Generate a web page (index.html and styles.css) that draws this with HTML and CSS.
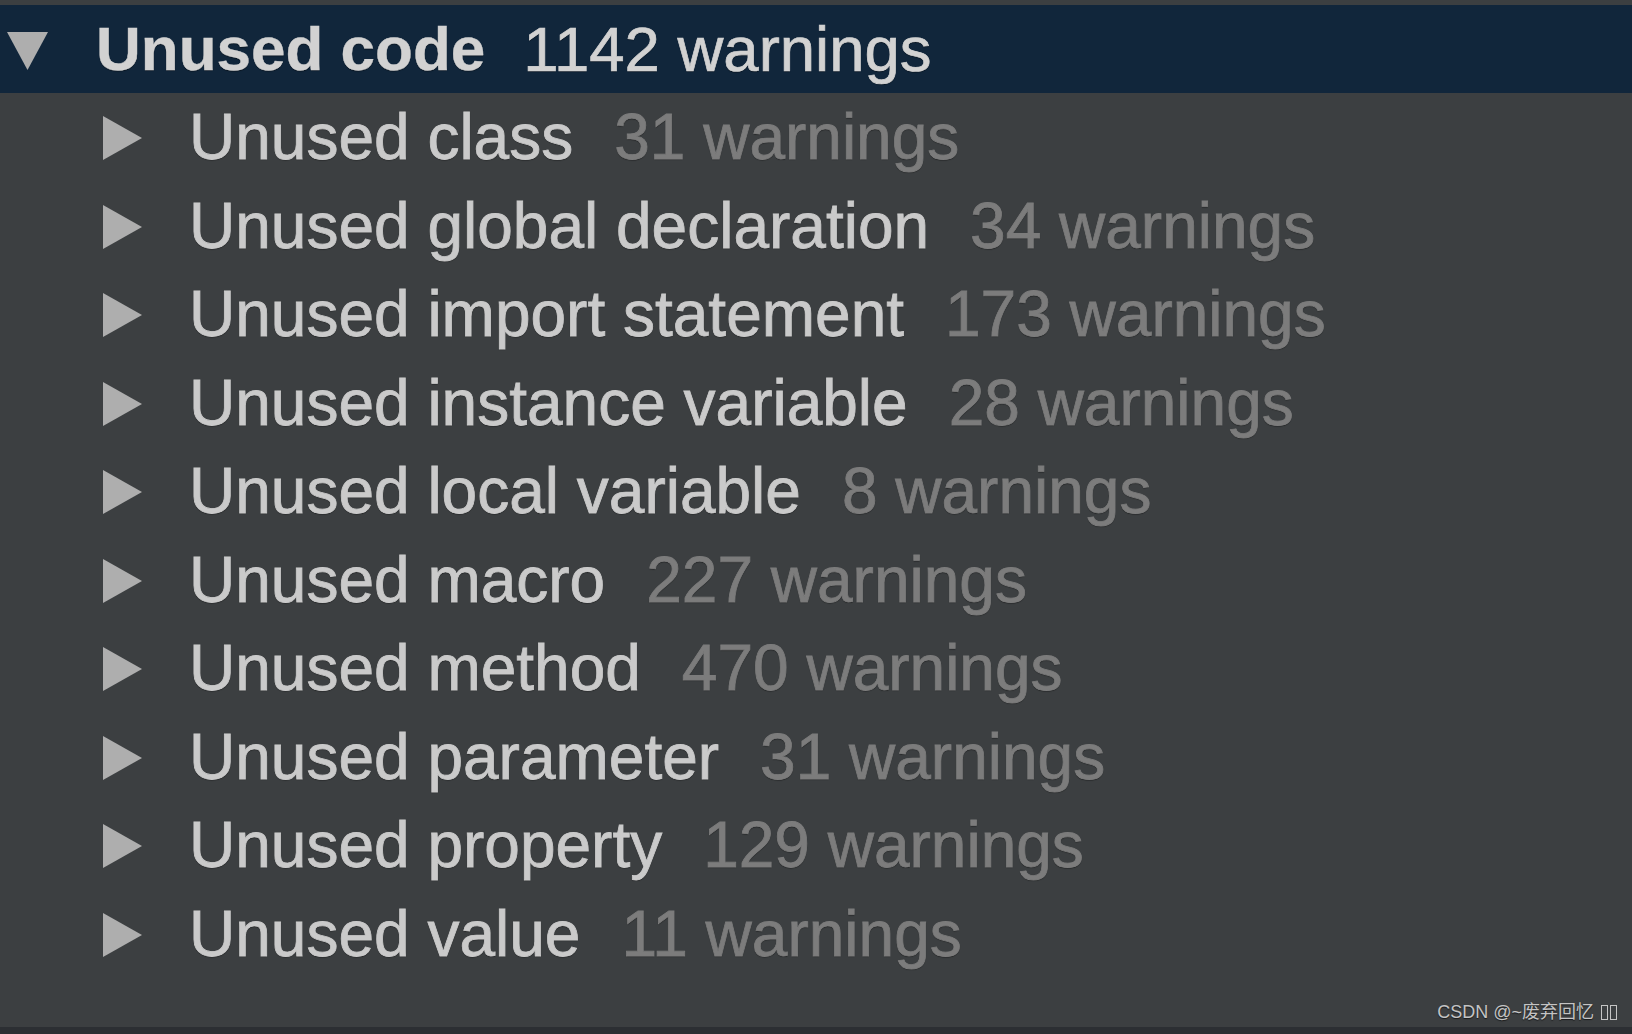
FILE: index.html
```html
<!DOCTYPE html>
<html lang="en">
<head>
<meta charset="utf-8">
<title>Unused code</title>
<link rel="stylesheet" href="styles.css">
</head>
<body>
<div class="page">
  <div class="tree">
    <div class="row header">
      <svg class="arrow arrow-down" width="41" height="38" viewBox="0 0 41 38"><polygon points="0,0 41,0 20.5,38" fill="#aeaeae"/></svg>
      <span class="label">Unused code</span>
      <span class="count">1142 warnings</span>
    </div>
    <div class="row child">
      <svg class="arrow arrow-right" width="39" height="44" viewBox="0 0 39 44"><polygon points="0,0 39,22 0,44" fill="#aeaeae"/></svg>
      <span class="label">Unused class</span><span class="count">31 warnings</span>
    </div>
    <div class="row child">
      <svg class="arrow arrow-right" width="39" height="44" viewBox="0 0 39 44"><polygon points="0,0 39,22 0,44" fill="#aeaeae"/></svg>
      <span class="label">Unused global declaration</span><span class="count">34 warnings</span>
    </div>
    <div class="row child">
      <svg class="arrow arrow-right" width="39" height="44" viewBox="0 0 39 44"><polygon points="0,0 39,22 0,44" fill="#aeaeae"/></svg>
      <span class="label">Unused import statement</span><span class="count">173 warnings</span>
    </div>
    <div class="row child">
      <svg class="arrow arrow-right" width="39" height="44" viewBox="0 0 39 44"><polygon points="0,0 39,22 0,44" fill="#aeaeae"/></svg>
      <span class="label">Unused instance variable</span><span class="count">28 warnings</span>
    </div>
    <div class="row child">
      <svg class="arrow arrow-right" width="39" height="44" viewBox="0 0 39 44"><polygon points="0,0 39,22 0,44" fill="#aeaeae"/></svg>
      <span class="label">Unused local variable</span><span class="count">8 warnings</span>
    </div>
    <div class="row child">
      <svg class="arrow arrow-right" width="39" height="44" viewBox="0 0 39 44"><polygon points="0,0 39,22 0,44" fill="#aeaeae"/></svg>
      <span class="label">Unused macro</span><span class="count">227 warnings</span>
    </div>
    <div class="row child">
      <svg class="arrow arrow-right" width="39" height="44" viewBox="0 0 39 44"><polygon points="0,0 39,22 0,44" fill="#aeaeae"/></svg>
      <span class="label">Unused method</span><span class="count">470 warnings</span>
    </div>
    <div class="row child">
      <svg class="arrow arrow-right" width="39" height="44" viewBox="0 0 39 44"><polygon points="0,0 39,22 0,44" fill="#aeaeae"/></svg>
      <span class="label">Unused parameter</span><span class="count">31 warnings</span>
    </div>
    <div class="row child">
      <svg class="arrow arrow-right" width="39" height="44" viewBox="0 0 39 44"><polygon points="0,0 39,22 0,44" fill="#aeaeae"/></svg>
      <span class="label">Unused property</span><span class="count">129 warnings</span>
    </div>
    <div class="row child">
      <svg class="arrow arrow-right" width="39" height="44" viewBox="0 0 39 44"><polygon points="0,0 39,22 0,44" fill="#aeaeae"/></svg>
      <span class="label">Unused value</span><span class="count">11 warnings</span>
    </div>
  </div>
  <div class="filler"></div>
  <div class="bottom-strip"></div>
  <div class="watermark">CSDN @~废弃回忆 <span class="tofu"></span><span class="tofu"></span></div>
</div>
</body>
</html>
```

FILE: styles.css
```css
html, body {
  margin: 0;
  padding: 0;
}

body {
  background: #3c3f41;
  font-family: "Liberation Sans", Arial, sans-serif;
  overflow: hidden;
}

.page {
  position: relative;
  width: 1632px;
  height: 1034px;
  display: flex;
  flex-direction: column;
  padding-top: 5px;
  box-sizing: border-box;
  background: #3c3f41;
}

.tree {
  display: flex;
  flex-direction: column;
}

.row {
  display: flex;
  align-items: center;
  white-space: nowrap;
  text-shadow: 0 1px 1px rgba(0, 0, 0, 0.45);
}

.header {
  height: 88px;
  background: #11263b;
  padding-left: 7px;
}

.header .arrow {
  margin-right: 48px;
  margin-top: 3px;
}

.header .label {
  font-size: 62px;
  font-weight: bold;
  line-height: 88px;
  color: #d2d2d2;
  -webkit-text-stroke: 0.4px #d2d2d2;
}

.header .count {
  font-size: 63.5px;
  line-height: 88px;
  color: #d2d2d2;
  margin-left: 38px;
  -webkit-text-stroke: 0.7px #d2d2d2;
}

.child {
  height: 88.5px;
  padding-left: 103px;
}

.child .arrow {
  margin-right: 47px;
  margin-top: 2px;
}

.child .label {
  font-size: 64px;
  line-height: 88.5px;
  color: #cacaca;
  -webkit-text-stroke: 0.8px #cacaca;
}

.child .count {
  font-size: 64px;
  line-height: 88.5px;
  color: #7c7c7c;
  margin-left: 41px;
  -webkit-text-stroke: 0.8px #7c7c7c;
}

.arrow {
  flex: none;
  display: block;
}

.filler {
  flex: 1;
}

.bottom-strip {
  height: 7px;
  background: #2c2f33;
}

.watermark {
  position: absolute;
  right: 15px;
  bottom: 11px;
  font-family: "Liberation Sans", "Noto Sans CJK SC", sans-serif;
  font-size: 18px;
  line-height: 22px;
  color: #c4c4c4;
  text-shadow: 0 1px 1px rgba(0, 0, 0, 0.6);
  display: flex;
  align-items: center;
  gap: 1px;
  white-space: pre;
}

.tofu {
  display: inline-block;
  width: 5px;
  height: 13px;
  border: 1px solid #c4c4c4;
  margin-left: 1px;
}
```
